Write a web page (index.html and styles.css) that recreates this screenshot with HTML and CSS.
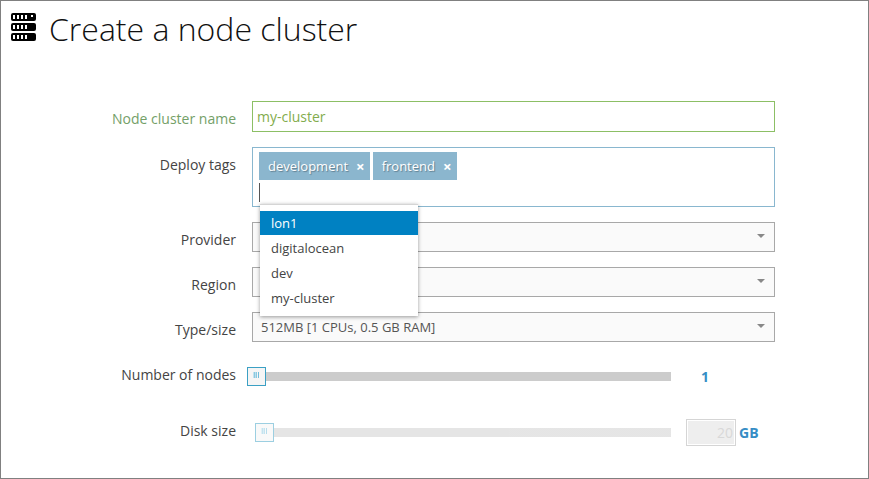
FILE: index.html
```html
<!DOCTYPE html>
<html lang="en">
<head>
<meta charset="utf-8">
<title>Create a node cluster</title>
<link rel="stylesheet" href="styles.css">
</head>
<body>
<main class="page">
  <header class="header">
    <svg class="header-icon" viewBox="0 0 25 28" aria-hidden="true">
      <rect x="0" y="0" width="25" height="8" rx="2"/>
      <rect x="0" y="10" width="25" height="8" rx="2"/>
      <rect x="0" y="20" width="25" height="8" rx="2"/>
      <path fill="#fff" d="M2 2h2v4h-2zM6 2h2v4h-2zM10 2h2v4h-2zM14 2h2v4h-2zM20 2h2v2h-2zM2 12h2v4h-2zM6 12h2v4h-2zM10 12h2v4h-2zM14 12h2v4h-2zM2 22h2v4h-2zM6 22h2v4h-2zM10 22h2v4h-2zM14 22h2v4h-2z"/>
    </svg>
    <h1 class="title">Create a node cluster</h1>
  </header>
  <form class="form">
    <label class="label label-valid" for="name">Node cluster name</label>
    <input class="text-input" id="name" type="text" value="my-cluster">

    <label class="label" for="tags">Deploy tags</label>
    <div class="tag-box">
      <div class="tags">
        <span class="tag">development <button class="tag-remove" type="button">×</button></span>
        <span class="tag">frontend <button class="tag-remove" type="button">×</button></span>
      </div>
      <input class="tag-input" id="tags" type="text">
      <ul class="menu">
        <li class="menu-item menu-item-active">lon1</li>
        <li class="menu-item">digitalocean</li>
        <li class="menu-item">dev</li>
        <li class="menu-item">my-cluster</li>
      </ul>
    </div>

    <label class="label" for="provider">Provider</label>
    <div class="select-wrap"><select class="select" id="provider"><option></option></select></div>

    <label class="label" for="region">Region</label>
    <div class="select-wrap"><select class="select" id="region"><option></option></select></div>

    <label class="label" for="size">Type/size</label>
    <div class="select-wrap"><select class="select" id="size"><option>512MB [1 CPUs, 0.5 GB RAM]</option></select></div>

    <label class="label" for="nodes">Number of nodes</label>
    <div class="slider-row slider-row-nodes">
      <div class="slider-cell"><input class="slider" id="nodes" type="range" min="1" max="10" value="1"></div>
      <output class="value value-count" for="nodes">1</output>
    </div>

    <label class="label" for="disk">Disk size</label>
    <div class="slider-row">
      <div class="slider-cell slider-cell-disk"><input class="slider" id="disk" type="range" min="20" max="200" value="20" disabled></div>
      <div class="disk-value">
        <input class="disk-input" type="text" value="20" aria-label="Disk size in GB" disabled>
        <span class="value">GB</span>
      </div>
    </div>
  </form>
</main>
</body>
</html>
```
FILE: styles.css
```css
* {
  box-sizing: border-box;
}

body {
  margin: 0;
  background: #fff;
  color: #444;
  font: 14px/20px "Open Sans", sans-serif;
}

input,
select,
button {
  margin: 0;
  font: inherit;
}

.page {
  min-height: 100vh;
  border: 1px solid #808080;
}

.header {
  display: flex;
  align-items: flex-start;
  gap: 13px;
  padding: 8px 10px 0;
  height: 100px;
}

.header-icon {
  width: 25px;
  height: 28px;
  margin-top: 4px;
  fill: #000;
}

.title {
  margin: 0;
  color: #111;
  font-size: 32px;
  font-weight: 300;
  line-height: 40px;
}

.form {
  display: grid;
  grid-template-columns: 235px 1fr;
  column-gap: 16px;
  row-gap: 15px;
  align-items: start;
  padding-right: 93px;
}

.label {
  padding-top: 8px;
  text-align: right;
}

.label-valid {
  color: #74a068;
}

.text-input {
  width: 100%;
  height: 31px;
  padding: 0 4px;
  border: 1px solid #8cbf65;
  background: #fff;
  color: #83ac4d;
  outline: 0;
}

.tag-box {
  position: relative;
  height: 60px;
  padding: 4px 6px;
  border: 1px solid #89b7cf;
}

.tags {
  display: flex;
  gap: 3px;
}

.tag {
  display: flex;
  align-items: center;
  gap: 8px;
  height: 28px;
  padding: 0 5px 0 9px;
  background: #8bb6ce;
  color: #fff;
  font-size: 13px;
  text-shadow: 1px 1px 1px rgba(0, 0, 0, 0.3);
}

.tag-remove {
  padding: 0;
  border: 0;
  background: none;
  color: #fff;
  font-size: 15px;
  font-weight: 700;
}

.tag-input {
  display: block;
  width: 100%;
  height: 19px;
  margin-top: 3px;
  padding: 0;
  border: 0;
  border-left: 1px solid #555;
  outline: 0;
}

.menu {
  position: absolute;
  z-index: 1;
  top: 56px;
  left: 7px;
  width: 158px;
  margin: 0;
  padding: 6px 0 5px;
  border-top: 1px solid #d5d5d5;
  background: #fff;
  box-shadow: 0 1px 4px rgba(0, 0, 0, 0.4);
  font-size: 13px;
  line-height: 24px;
  list-style: none;
}

.menu-item {
  margin-bottom: 1px;
  padding: 0 11px;
}

.menu-item-active {
  background: #0081c2;
  color: #fff;
}

.select-wrap {
  position: relative;
  height: 30px;
}

.select-wrap::after {
  content: "";
  position: absolute;
  top: 12px;
  right: 10px;
  border: 4px solid transparent;
  border-top-color: #888;
  border-bottom: 0;
  pointer-events: none;
}

.select {
  width: 100%;
  height: 30px;
  padding: 0 8px;
  border: 1px solid #a8a8a8;
  border-radius: 0;
  background: #fafafa;
  color: #555;
  font-size: 13px;
  appearance: none;
}

.slider-row {
  display: grid;
  grid-template-columns: 1fr 89px;
  column-gap: 15px;
  align-items: center;
  height: 39px;
}

.slider-row-nodes {
  margin-bottom: 2px;
}

.slider-cell {
  display: flex;
  margin-left: -5px;
}

.slider-cell-disk {
  margin-left: 3px;
}

.slider {
  width: 100%;
  height: 19px;
  background: linear-gradient(#ccc, #ccc) center / 100% 9px no-repeat;
  appearance: none;
}

.slider:disabled {
  opacity: 0.5;
}

.slider::-webkit-slider-thumb {
  width: 19px;
  height: 19px;
  border: 1px solid #3ba0c4;
  background: linear-gradient(90deg, #c4e2ee 1px, #8bc8e0 1px 2px, #b9dfed 2px 3px, #8bc8e0 3px 4px, #f5f5f5 4px 5px, #6fbddb 5px) 5px 4px / 6px 6px no-repeat #f5f5f5;
  appearance: none;
}

.value {
  color: #368dc5;
  font-weight: 700;
}

.value-count {
  padding-left: 15px;
}

.disk-value {
  display: flex;
  align-items: center;
  gap: 3px;
}

.disk-input {
  width: 50px;
  height: 27px;
  padding: 0 2px;
  border: 1px solid #d5d5d5;
  outline: 1px solid #fff;
  outline-offset: -2px;
  background: #eee;
  color: #d8d8d8;
  text-align: right;
}
```
